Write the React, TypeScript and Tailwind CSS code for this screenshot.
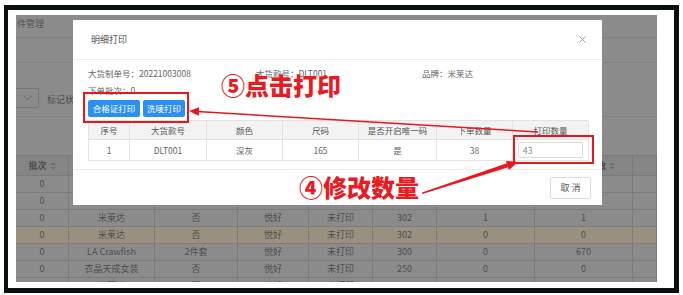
import React from 'react';

const cjk = '"Noto Sans CJK SC", "Noto Sans", sans-serif';

const bgRows = [
  ['0', '', '', '', '', '', '', '', ''],
  ['0', '', '', '', '', '', '', '', ''],
  ['0', '米莱达', '否', '悦好', '未打印', '302', '1', '1', ''],
  ['0', '米莱达', '否', '悦好', '未打印', '302', '0', '0', ''],
  ['0', 'LA Crawfish', '2件套', '悦好', '未打印', '300', '0', '670', ''],
  ['0', '衣晶天成女装', '否', '悦好', '未打印', '250', '0', '0', ''],
  ['0', '米莱达', '否', '悦好', '未打印', '200', '0', '0', ''],
];

const modalHead = ['序号', '大货款号', '颜色', '尺码', '是否开启唯一码', '下单数量', '打印数量'];

const SortIcon = () => (
  <svg width="6" height="8" viewBox="0 0 6 8" className="ml-[3px]">
    <path d="M3 0.5 L5.5 3 H0.5 Z" fill="#6a6a6a" />
    <path d="M3 7.5 L5.5 5 H0.5 Z" fill="#6a6a6a" />
  </svg>
);

const BackgroundPage = () => (
  <div className="flex flex-col w-[641px] h-[267px] bg-[#8b8b8b] text-[9px] text-[#4e4e4e]">
    <div className="shrink-0 h-[23px] border-b border-[#828282] pl-[1px] pt-[2px] text-[#555]">件管理</div>
    <div className="shrink-0 h-[25px] border-b border-[#828282]" />
    <div className="shrink-0 h-[54px] border-b border-[#828282] pt-[25px] flex items-start">
      <div className="w-[23px] h-[20px] border border-l-0 border-[#777] rounded-r-[2px] flex items-center justify-center">
        <svg width="9" height="6" viewBox="0 0 9 6">
          <path d="M0.5 0.8 L4.5 4.8 L8.5 0.8" stroke="#666" fill="none" strokeWidth="1" />
        </svg>
      </div>
      <span className="ml-[8px] mt-[5px] text-[#4e4e4e]">标记状态</span>
    </div>
    <div className="shrink-0 h-[38px]" />
    <div className="shrink-0 grid grid-cols-[53px_86px_83px_71px_64px_64px_98px_98px_24px] border-t border-[#7c7c7c]">
      {['批次', '品牌', '', '', '', '', '', '合格证打印数', ''].map((h, i) => (
        <div
          key={i}
          className="h-[20px] bg-[#858585] border-r border-b border-[#7a7a7a] flex items-center justify-center font-bold text-[#4a4a4a]"
        >
          {h}
          {h && (i === 0 || i === 7) ? <SortIcon /> : null}
        </div>
      ))}
      {bgRows.map((row, r) =>
        row.map((c, i) => (
          <div
            key={r + '-' + i}
            className={
              'h-[17px] border-r border-b border-[#7c7c7c] flex items-center justify-center ' +
              (r === 3 ? 'bg-[#9a9080]' : '')
            }
          >
            {c}
          </div>
        ))
      )}
    </div>
  </div>
);

const Modal = () => (
  <div className="absolute left-[57px] top-[5px] w-[529px] h-[185px] bg-white text-[8.5px] text-[#666] flex flex-col">
    <div className="shrink-0 h-[40px] border-b border-[#ececec] flex items-center justify-between pl-[18px] pr-[16px]">
      <span className="text-[9px] text-[#555]">明细打印</span>
      <svg width="7" height="7" viewBox="0 0 7 7">
        <path d="M0.5 0.5 L6.5 6.5 M6.5 0.5 L0.5 6.5" stroke="#999" strokeWidth="0.9" />
      </svg>
    </div>
    <div className="shrink-0 px-[15px] pt-[7px]">
      <div className="grid grid-cols-[168px_166px_1fr] h-[12px] items-center">
        <span>大货制单号：20221003008</span>
        <span>大货款号：DLT001</span>
        <span>品牌：米莱达</span>
      </div>
      <div className="h-[12px] mt-[5px] flex items-center">下单批次：0</div>
      <div className="flex gap-[3px] mt-[4px]">
        <div className="h-[17px] w-[52px] bg-[#2b8ff5] text-white rounded-[2px] flex items-center justify-center">合格证打印</div>
        <div className="h-[17px] w-[42px] bg-[#2b8ff5] text-white rounded-[2px] flex items-center justify-center">洗唛打印</div>
      </div>
      <div className="mt-[3px] w-[500px] border-l border-t border-[#e3e3e3] grid grid-cols-[41px_77px_76px_76px_78px_76px_76px]">
        {modalHead.map((h) => (
          <div key={h} className="h-[19px] bg-[#f3f3f3] border-r border-b border-[#e3e3e3] flex items-center justify-center text-[#555]">
            {h}
          </div>
        ))}
        {['1', 'DLT001', '深灰', '165', '是', '38'].map((c, i) => (
          <div key={i} className="h-[21px] border-r border-b border-[#e3e3e3] flex items-center justify-center">
            {c}
          </div>
        ))}
        <div className="h-[21px] border-r border-b border-[#e3e3e3] flex items-center pl-[5px]">
          <div className="w-[65px] h-[16px] border border-[#dcdcdc] rounded-[2px] flex items-center pl-[4px] text-[#888]">43</div>
        </div>
      </div>
    </div>
    <div className="shrink-0 mt-[8px] border-t border-[#ececec] flex justify-end pr-[11px] pt-[7px]">
      <div className="w-[41px] h-[22px] border border-[#dcdcdc] rounded-[2px] flex items-center justify-center text-[9px] text-[#555]">
        取 消
      </div>
    </div>
  </div>
);

export default function App() {
  return (
    <div className="relative w-[683px] h-[295px] bg-white overflow-hidden" style={{ fontFamily: cjk }}>
      <div className="ml-[4px] mt-[5px] w-[675px] h-[288px] border-[5px] border-l-[4px] border-[#08120a] pl-[8px] pt-[5px]">
        <div className="relative w-[641px] h-[267px] overflow-hidden">
          <BackgroundPage />
          <Modal />
        </div>
      </div>

      {/* annotations */}
      <div className="absolute left-[83px] top-[92px] w-[106px] h-[31px] border-2 border-[#e8161e]" />
      <div className="absolute left-[513px] top-[135px] w-[81px] h-[29px] border-2 border-[#e8161e]" />
      <svg className="absolute left-0 top-0" width="683" height="295" viewBox="0 0 683 295">
        <line x1="538" y1="132" x2="197" y2="111.5" stroke="#e8161e" strokeWidth="1.6" />
        <polygon points="189,111 199.2,107.2 198.7,115.8" fill="#e8161e" />
        <polygon points="422,192.5 507,163.3 508.2,167.3 422.4,194" fill="#e8161e" />
        <polygon points="518,162 508.9,169.9 505.9,160.9" fill="#e8161e" />
      </svg>
      <div className="absolute left-[221px] top-[71px] text-[24px] leading-[28px] font-black text-[#ea1a22] whitespace-nowrap">
        ⑤点击打印
      </div>
      <div className="absolute left-[299px] top-[173px] text-[24px] leading-[28px] font-black text-[#ea1a22] whitespace-nowrap">
        ④修改数量
      </div>
    </div>
  );
}
